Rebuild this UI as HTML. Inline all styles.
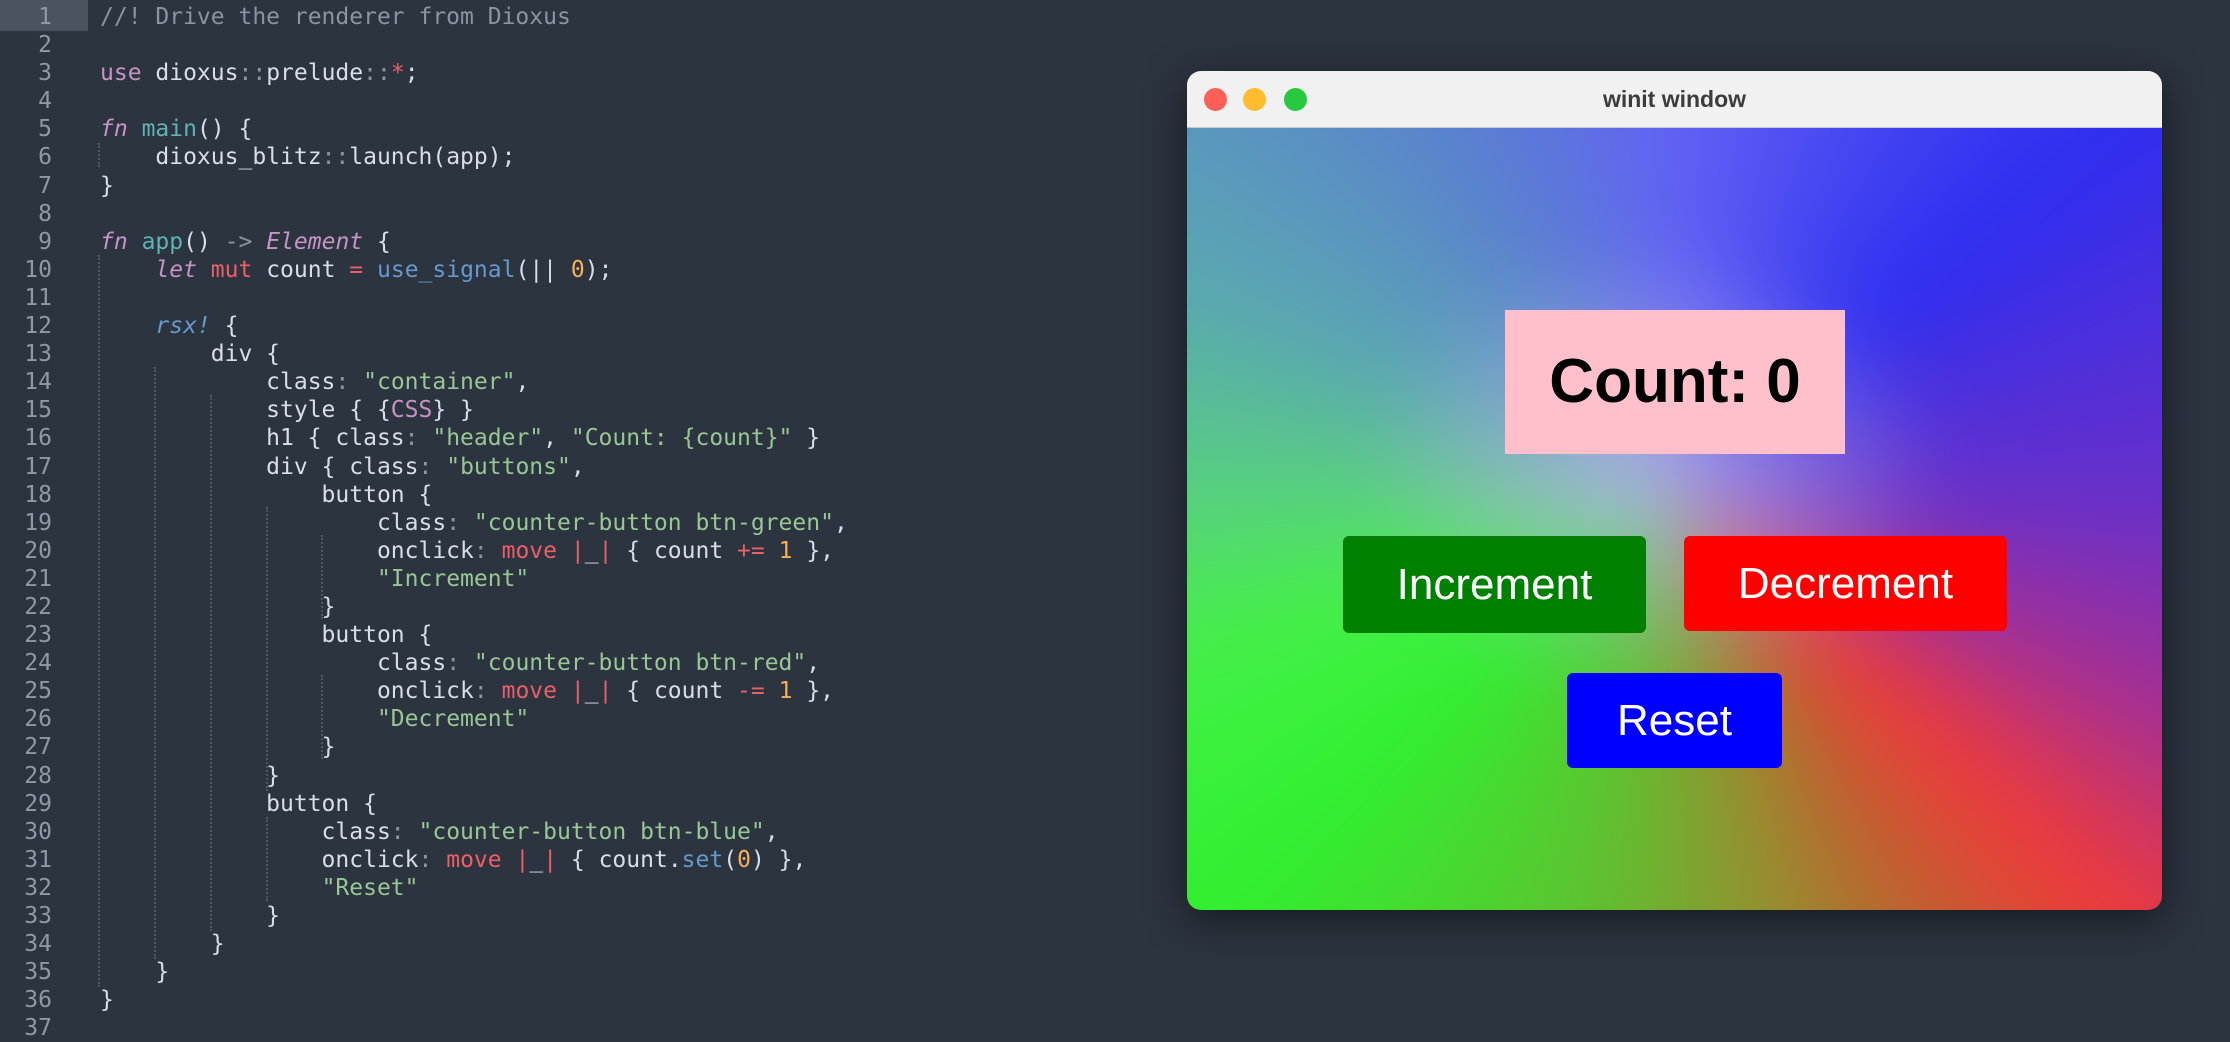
<!DOCTYPE html>
<html><head><meta charset="utf-8"><style>
html,body{margin:0;padding:0}
body{width:2230px;height:1040px;background:#2c3440;position:relative;overflow:hidden;font-family:"DejaVu Sans Mono","Liberation Mono",monospace}
.code{position:absolute;left:0;top:3px;font-size:23px;line-height:28.1px;white-space:pre;color:#d8dee9}
.ln{position:absolute;left:0;width:52px;text-align:right;color:#8f99a4}
.tx{position:absolute;left:100px}
.hl{position:absolute;left:0;top:0;width:88px;height:31px;background:#4a5460}
.g{position:absolute;border-left:2px dotted #4e5864;width:0}
.c{color:#8a95a0}.k{color:#c594c5}.f{color:#5fb3b3}.b{color:#6699cc}.s{color:#99c794}.r{color:#ec5f67}.o{color:#f9ae58}.p{color:#8a95a0}.i{font-style:italic}
.win{position:absolute;left:1187px;top:71px;width:975px;height:839px;border-radius:14px;overflow:hidden;box-shadow:0 10px 40px rgba(0,0,0,.5)}
.tb{height:56px;background:#f1f1f1;border-bottom:1px solid #c8c8c8;position:relative;font-family:"Liberation Sans",sans-serif;font-weight:bold;font-size:23px;color:#3c3c3c;text-align:center;line-height:56px}
.dot{position:absolute;top:17px;width:23px;height:23px;border-radius:50%}
.bg{position:absolute;left:0;top:57px;right:0;bottom:0;overflow:hidden}
.gr{position:absolute;left:-80px;top:-80px;right:-80px;bottom:-80px;filter:blur(35px);background:
radial-gradient(ellipse 26% 24% at 48% 45%,rgba(180,175,230,.9),rgba(180,175,230,0) 100%),
conic-gradient(from 0deg at 50% 47%,#6262f5 0deg,#2e2ef0 50deg,#6a30c8 92deg,#a83090 115deg,#f03a3a 134deg,#c06030 150deg,#9a8a30 165deg,#60c030 190deg,#30f030 228deg,#45f048 252deg,#58d080 270deg,#5aa8b0 292deg,#5a80d0 330deg,#6262f5 360deg)}
.box{position:absolute;font-family:"Liberation Sans",sans-serif;text-align:center}
.cnt{left:318px;top:182px;width:340px;height:144px;background:#ffc0cb;font-weight:bold;font-size:62px;line-height:144px;color:#000}
.btn{color:#fff;font-size:44px;border-radius:6px;height:95px;line-height:95px}
</style></head><body>
<div class="hl"></div>
<div class="g" style="left:98px;top:143px;height:24px"></div>
<div class="g" style="left:98px;top:255px;height:732px"></div>
<div class="g" style="left:154px;top:367px;height:592px"></div>
<div class="g" style="left:210px;top:395px;height:536px"></div>
<div class="g" style="left:266px;top:507px;height:284px"></div>
<div class="g" style="left:266px;top:817px;height:84px"></div>
<div class="g" style="left:321px;top:535px;height:84px"></div>
<div class="g" style="left:321px;top:675px;height:84px"></div>
<div class="code"><div class="ln">1
2
3
4
5
6
7
8
9
10
11
12
13
14
15
16
17
18
19
20
21
22
23
24
25
26
27
28
29
30
31
32
33
34
35
36
37</div><div class="tx"><span class="c">//! Drive the renderer from Dioxus</span>

<span class="k">use</span> dioxus<span class="p">::</span>prelude<span class="p">::</span><span class="r">*</span>;

<span class="k i">fn</span> <span class="f">main</span>() {
    dioxus_blitz<span class="p">::</span>launch(app);
}

<span class="k i">fn</span> <span class="f">app</span>() <span class="p">-&gt;</span> <span class="k i">Element</span> {
    <span class="k i">let</span> <span class="r">mut</span> count <span class="r">=</span> <span class="b">use_signal</span>(|| <span class="o">0</span>);

    <span class="b i">rsx!</span> {
        div {
            class<span class="p">:</span> <span class="s">"container"</span>,
            style { {<span class="k">CSS</span>} }
            h1 { class<span class="p">:</span> <span class="s">"header"</span>, <span class="s">"Count: {count}"</span> }
            div { class<span class="p">:</span> <span class="s">"buttons"</span>,
                button {
                    class<span class="p">:</span> <span class="s">"counter-button btn-green"</span>,
                    onclick<span class="p">:</span> <span class="r">move</span> <span class="r">|</span>_<span class="r">|</span> { count <span class="r">+=</span> <span class="o">1</span> },
                    <span class="s">"Increment"</span>
                }
                button {
                    class<span class="p">:</span> <span class="s">"counter-button btn-red"</span>,
                    onclick<span class="p">:</span> <span class="r">move</span> <span class="r">|</span>_<span class="r">|</span> { count <span class="r">-=</span> <span class="o">1</span> },
                    <span class="s">"Decrement"</span>
                }
            }
            button {
                class<span class="p">:</span> <span class="s">"counter-button btn-blue"</span>,
                onclick<span class="p">:</span> <span class="r">move</span> <span class="r">|</span>_<span class="r">|</span> { count.<span class="b">set</span>(<span class="o">0</span>) },
                <span class="s">"Reset"</span>
            }
        }
    }
}
</div></div>
<div class="win">
<div class="tb">winit window
<div class="dot" style="left:17px;background:#fe5f57"></div>
<div class="dot" style="left:56px;background:#febc2e"></div>
<div class="dot" style="left:97px;background:#28c840"></div>
</div>
<div class="bg">
<div class="gr"></div>
<div class="box cnt">Count: 0</div>
<div class="box btn" style="left:156px;top:408px;width:301px;background:#008000;border:1px solid #0a7a0a">Increment</div>
<div class="box btn" style="left:497px;top:408px;width:323px;background:#ff0000">Decrement</div>
<div class="box btn" style="left:380px;top:545px;width:215px;background:#0000ff">Reset</div>
</div>
</div>
</body></html>
